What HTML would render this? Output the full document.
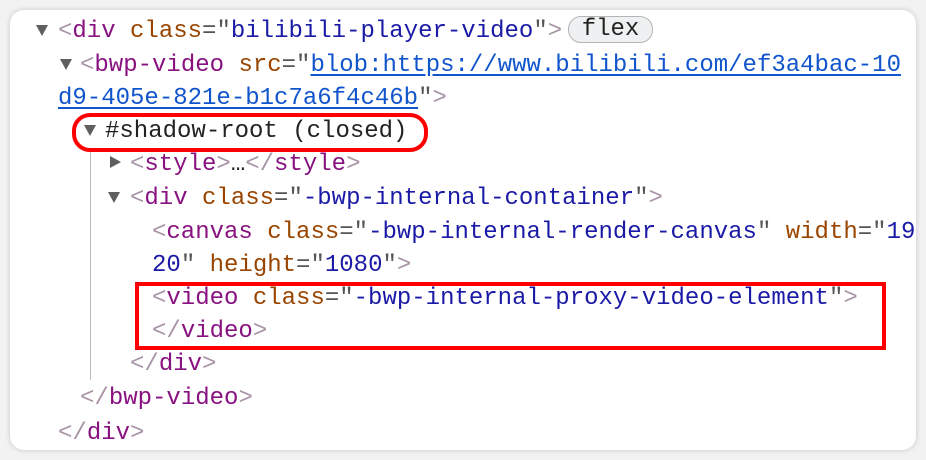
<!DOCTYPE html>
<html><head><style>
html,body{margin:0;padding:0;background:#f2f2f2;width:926px;height:460px;overflow:hidden}
.card{position:absolute;left:10px;top:10px;width:906px;height:440px;background:#fff;border-radius:14px;box-shadow:0 0 6px rgba(0,0,0,.18)}
.l{position:absolute;font-family:"Liberation Mono",monospace;font-size:24px;line-height:34px;white-space:pre;height:34px;margin-top:2px}
.t{color:#881280}.b{color:#a894a6}.a{color:#994500}.v{color:#1a1aa6}.p{color:#555}
.u{color:#1155cc;text-decoration:underline;text-underline-offset:3px}
.k{color:#222}
.tri{position:absolute;width:0;height:0;border-left:6.5px solid transparent;border-right:6.5px solid transparent;border-top:11px solid #5f5f5f}
.trr{position:absolute;width:0;height:0;border-top:6.5px solid transparent;border-bottom:6.5px solid transparent;border-left:11px solid #5f5f5f}
.badge{position:absolute;left:568px;top:16px;width:83px;height:25px;border:1.5px solid #b5b5b5;border-radius:13px;background:#eef0f1;font-family:"Liberation Mono",monospace;font-size:24px;line-height:25px;text-align:center;color:#222}
</style></head><body>
<div class="card"></div>
<div class="tri" style="left:36px;top:25px"></div>
<div class="l" style="left:58px;top:13px"><span class="b">&lt;</span><span class="t">div</span> <span class="a">class</span><span class="p">="</span><span class="v">bilibili-player-video</span><span class="p">"</span><span class="b">&gt;</span></div>
<div class="badge">flex</div>
<div class="tri" style="left:60px;top:59px"></div>
<div class="l" style="left:80px;top:47px"><span class="b">&lt;</span><span class="t">bwp-video</span> <span class="a">src</span><span class="p">="</span><span class="u">blob:https://www.bilibili.com/ef3a4bac-10</span></div>
<div class="l" style="left:58px;top:80px"><span class="u">d9-405e-821e-b1c7a6f4c46b</span><span class="p">"</span><span class="b">&gt;</span></div>
<div class="tri" style="left:84px;top:125px"></div>
<div class="l" style="left:105px;top:113px"><span class="k">#shadow-root (closed)</span></div>
<div style="position:absolute;left:72px;top:113px;width:348px;height:31px;border:4px solid #f00;border-radius:18px"></div>
<div style="position:absolute;left:90px;top:152px;width:1px;height:228px;background:#bbb"></div>
<div class="trr" style="left:110px;top:156px"></div>
<div class="l" style="left:130px;top:146px"><span class="b">&lt;</span><span class="t">style</span><span class="b">&gt;</span><span class="k">…</span><span class="b">&lt;/</span><span class="t">style</span><span class="b">&gt;</span></div>
<div class="tri" style="left:108px;top:192px"></div>
<div class="l" style="left:130px;top:180px"><span class="b">&lt;</span><span class="t">div</span> <span class="a">class</span><span class="p">="</span><span class="v">-bwp-internal-container</span><span class="p">"</span><span class="b">&gt;</span></div>
<div class="l" style="left:152px;top:214px"><span class="b">&lt;</span><span class="t">canvas</span> <span class="a">class</span><span class="p">="</span><span class="v">-bwp-internal-render-canvas</span><span class="p">"</span> <span class="a">width</span><span class="p">="</span><span class="v">19</span></div>
<div class="l" style="left:152px;top:247px"><span class="v">20</span><span class="p">"</span> <span class="a">height</span><span class="p">="</span><span class="v">1080</span><span class="p">"</span><span class="b">&gt;</span></div>
<div class="l" style="left:152px;top:280px"><span class="b">&lt;</span><span class="t">video</span> <span class="a">class</span><span class="p">="</span><span class="v">-bwp-internal-proxy-video-element</span><span class="p">"</span><span class="b">&gt;</span></div>
<div class="l" style="left:152px;top:313px"><span class="b">&lt;/</span><span class="t">video</span><span class="b">&gt;</span></div>
<div style="position:absolute;left:135px;top:282px;width:743px;height:60px;border:4px solid #f00"></div>
<div class="l" style="left:130px;top:346px"><span class="b">&lt;/</span><span class="t">div</span><span class="b">&gt;</span></div>
<div class="l" style="left:80px;top:380px"><span class="b">&lt;/</span><span class="t">bwp-video</span><span class="b">&gt;</span></div>
<div class="l" style="left:58px;top:415px"><span class="b">&lt;/</span><span class="t">div</span><span class="b">&gt;</span></div>
</body></html>
